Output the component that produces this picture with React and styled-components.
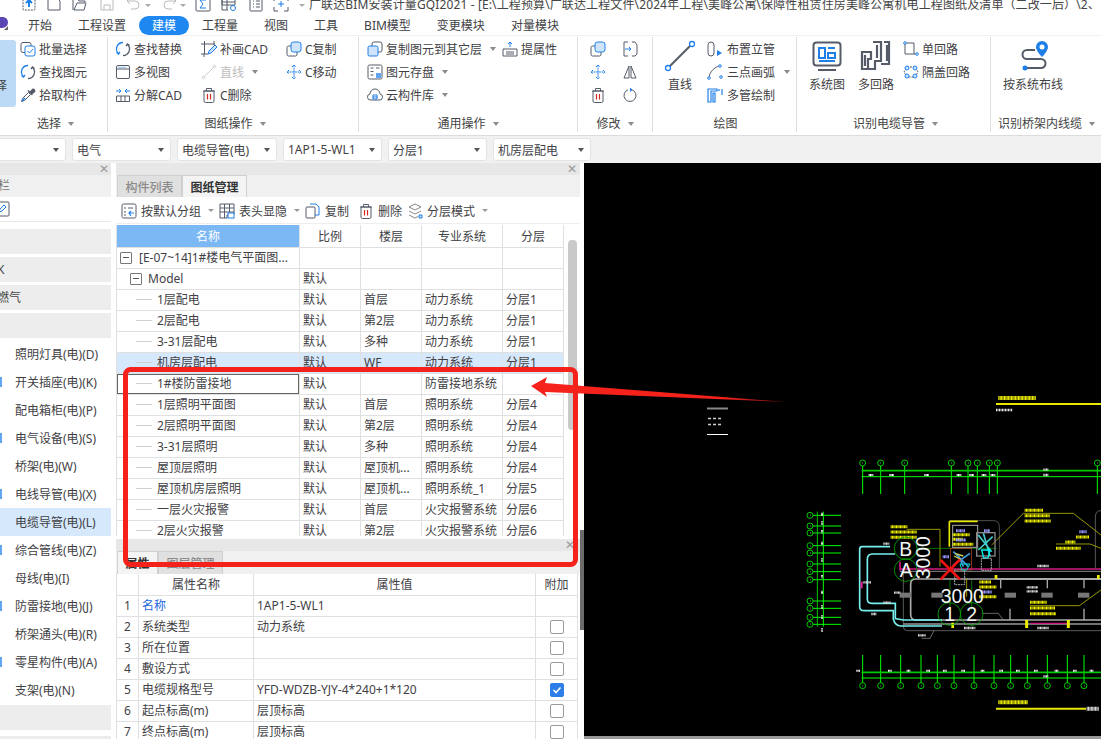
import React from 'react';
import styled, { createGlobalStyle } from 'styled-components';

const Global = createGlobalStyle`
  html, body { margin: 0; padding: 0; background: #fff; overflow: hidden; }
  * { box-sizing: border-box; }
  body { font-family: "Noto Sans", "Noto Sans CJK SC", sans-serif; font-size: 12px; color: #3f4145; }
`;

const G = '#555c68';
const B = '#1f7fe8';
const L = '#cfe3fb';
const R = '#d8281f';

const shapes = {
  upload: <><rect x="2" y="2" width="12" height="12" rx="1" fill="none" stroke={G} strokeDasharray="2 1" /><path d="M8 11V5M5 7l3-3 3 3" fill="none" stroke={B} strokeWidth="2" /></>,
  newfile: <path d="M2 2h9l3 3v9H2z" fill="none" stroke={G} />,
  open: <path d="M1 14V3h5l1 2h6v2H5L2 14h10l2-7" fill="none" stroke={G} />,
  disk: <path d="M2 2h10l2 2v10H2zM5 14V9h6v5" fill="none" stroke="#bbb" />,
  undo: <path d="M4 2L1 5l3 3M1 5h8a4 4 0 0 1 0 8H5" fill="none" stroke="#bbb" />,
  redo: <path d="M12 2l3 3-3 3M15 5H7a4 4 0 0 0 0 8h4" fill="none" stroke="#bbb" />,
  sum: <><rect x="1" y="1" width="14" height="14" rx="1" fill="none" stroke={G} /><path d="M11 4H5l3 4-3 4h6" fill="none" stroke={B} /></>,
  table: <><path d="M1 2h13v7H1zM1 6h13M6 2v12M1 2v12h6" fill="none" stroke={G} /><circle cx="12" cy="12" r="2.5" fill="none" stroke={B} /></>,
  list: <><rect x="2" y="1" width="12" height="14" rx="1" fill="none" stroke={G} /><path d="M5 5h1M8 5h4M5 8h1M8 8h4M5 11h1M8 11h4" stroke={G} /></>,
  crop: <><path d="M1 5V1h4M11 1h4v4M1 11v4h4M15 11v4h-4" fill="none" stroke={G} /><path d="M8 5v6M5 8h6" stroke={B} /></>,
  batch: <><rect x="1" y="1.5" width="10" height="10" rx="2" fill="none" stroke={G} /><rect x="5" y="5" width="10" height="10" rx="2" fill="#fff" stroke={B} /><path d="M7.5 10l2 2 3.5-4" fill="none" stroke={B} /></>,
  find: <><path d="M8 1.5A6.5 6.5 0 0 0 3.5 12.7M1.5 11.5l2 1.5 1.5-2" fill="none" stroke={B} strokeWidth="1.3" /><path d="M8 14.5a6.5 6.5 0 0 0 4.5-11.2M14.5 4.5l-2-1.5-1.5 2" fill="none" stroke={G} strokeWidth="1.3" /></>,
  pick: <><path d="M1.5 14.5l1-3 6-6 2 2-6 6z" fill="#fff" stroke={G} /><path d="M8 3.5l4.5 4.5M10 5.5l2.5-3a1.5 1.5 0 0 1 2 2l-3 2.5" fill={G} stroke={G} strokeWidth="1.5" /><path d="M2 14l3-3" stroke={B} strokeWidth="1.5" /></>,
  view: <><rect x="1.5" y="1.5" width="13" height="13" rx="1.5" fill="none" stroke={G} /><path d="M1.5 5h13" stroke={G} /><path d="M3.5 3.3h7" stroke={B} strokeDasharray="1 1" /></>,
  explode: <><path d="M1.5 9h13v5.5h-13zM6 9v5.5M10 9v5.5" fill="none" stroke={G} /><path d="M1 4h5M4 2l2 2-2 2M15 4h-5M12 2l-2 2 2 2" fill="none" stroke={B} /></>,
  patch: <><path d="M3.5 0v13M0 3h14M13 0v4M0 13h7M3 16v-3" fill="none" stroke={G} /><path d="M7 13l1-3 6-6 2 2-6 6z" fill={L} stroke={B} /></>,
  lineOff: <><path d="M3 13L13 3" stroke="#ccc" /><circle cx="2.5" cy="13.5" r="1.2" fill="none" stroke="#ccc" /><circle cx="13.5" cy="2.5" r="1.2" fill="none" stroke="#ccc" /></>,
  trash: <><path d="M3 4h10v10a1.5 1.5 0 0 1-1.5 1.5h-7A1.5 1.5 0 0 1 3 14zM2 4h12M5.500 4V1.500h5V4" fill="none" stroke={G} /><path d="M6.500 7v5.500M9.500 7v5.500" stroke={R} strokeWidth="1.2" /></>,
  ccopy: <><rect x="1" y="5" width="10" height="10" rx="1.5" fill="none" stroke={G} /><rect x="5" y="1" width="10" height="10" rx="2.500" fill={L} stroke={B} /></>,
  cmove: <path d="M8 1v14M1 8h14M6 3l2-2 2 2M6 13l2 2 2-2M3 6L1 8l2 2M13 6l2 2-2 2" fill="none" stroke={B} strokeDasharray="2 .6" />,
  layerCopy: <><rect x="5" y="1" width="10" height="10" rx="2" fill="#fff" stroke={G} /><rect x="1" y="5" width="10" height="10" rx="1.500" fill={L} stroke={B} /></>,
  attr: <><path d="M1 8h14v7H1zM4 11h8M4 13h8" fill="none" stroke={G} /><path d="M8 6V1M6 3l2-2 2 2" fill="none" stroke={B} /></>,
  saveIcon: <><rect x="1" y="1" width="14" height="14" rx="1.500" fill="none" stroke={G} /><path d="M3.500 4h3M9 4h3.500M3.500 7.500h3M3.500 11h3" stroke={G} /><rect x="9" y="9" width="5" height="5" fill={B} opacity=".7" /></>,
  cloud: <><path d="M4 13a3 3 0 0 1-1-6 5 5 0 0 1 10 0 3 3 0 0 1-1 6z" fill="none" stroke={G} /><path d="M5.500 10h5M6 8h4v4H6z" fill="none" stroke={B} /></>,
  share: <><rect x="1" y="4" width="9" height="11" rx="1" fill="none" stroke={G} /><path d="M5 1h6l3 3v8h-4" fill="none" stroke={B} /></>,
  mirror: <path d="M7 2v12H2zM9 2v12h5z" fill="none" stroke={G} />,
  rotate: <><path d="M10 2.800A6 6 0 1 1 6 2.800" fill="none" stroke={G} /><path d="M8 1l2 1.800L8 4.500" fill={B} stroke={B} /></>,
  flipDoc: <><path d="M6 1H2v14h4M10 1h3l2 3v9l-2 2h-3" fill="none" stroke={G} /><path d="M3 8h6M7 6l2 2-2 2" fill="none" stroke={B} /></>,
  riser: <><rect x="1" y="1" width="6" height="14" rx="3" fill="none" stroke={G} /><path d="M10 9v6l5-3z" fill={B} /></>,
  arc: <><path d="M2 14C2.500 8 7 3 13 2" fill="none" stroke={G} /><circle cx="2" cy="14" r="1.300" fill="#fff" stroke={B} /><circle cx="13" cy="2" r="1.300" fill="#fff" stroke={B} /><circle cx="14" cy="13" r="1.300" fill="#fff" stroke={B} /></>,
  multi: <path d="M1 2h9v2H4v11H1zM6 6h2v9H6zM12 2v2M15 2v6" fill="none" stroke={B} strokeWidth="1.200" />,
  single: <><path d="M2 2v11h12M2 2h9v11" fill="none" stroke={G} /><circle cx="2" cy="2" r="1.300" fill="#fff" stroke={B} /><circle cx="14" cy="13" r="1.300" fill="#fff" stroke={B} /></>,
  loop: <><path d="M4 3h8l3 5-3 5H4L1 8z" fill="none" stroke={G} strokeDasharray="2 1" /><circle cx="4" cy="4" r="2" fill={L} stroke={B} /><circle cx="4" cy="12" r="2" fill={L} stroke={B} /><circle cx="12" cy="4" r="2" fill={L} stroke={B} /><circle cx="12" cy="12" r="2" fill={L} stroke={B} /></>,
  group: <><rect x="1" y="1" width="14" height="14" rx="1.500" fill="none" stroke={G} /><path d="M3 5h2M7 5h5M3 9h2M3 12h2" stroke={G} /><path d="M8 10h5M10 8l-2 2 2 3" fill="none" stroke={B} strokeWidth="1.200" /></>,
  columns: <><path d="M1 1h14v11H8v3H1zM1 5h14M1 9h14M5.500 1v14M10.500 1v8" fill="none" stroke={G} /><rect x="9" y="10" width="6" height="5" fill="#fff" stroke={B} /></>,
  layers: <><path d="M2 4l6-3 6 3-6 3zM2 8l6 3 6-3M2 12l6 3 3-1.500" fill="none" stroke="#888" /><path d="M12 12h3v3h-3z" fill={L} stroke={B} /></>,
  edit: <><rect x="1" y="1" width="14" height="14" rx="1" fill="none" stroke={G} /><path d="M5 11l1-3 4-4 2 2-4 4z" fill="none" stroke={B} /></>,
  bigLine: <><path d="M3 27L27 3" stroke={G} strokeWidth="2" /><circle cx="3" cy="27" r="2.500" fill="#fff" stroke={B} strokeWidth="1.300" /><circle cx="27" cy="3" r="2.500" fill="#fff" stroke={B} strokeWidth="1.300" /></>,
  bigSys: <><rect x="1.500" y="1.500" width="27" height="23" rx="3" fill="none" stroke={G} strokeWidth="2" /><path d="M6 29h18" stroke={G} strokeWidth="2" /><path d="M7 7h6v10H7z" fill="none" stroke={B} strokeWidth="2" /><path d="M16 7h7M16 12h7v5h-7z" fill="none" stroke={B} strokeWidth="2" /><path d="M7 20h16" stroke={B} strokeWidth="2" /></>,
  bigMulti: <path d="M1 11h9v7H7v10H1zM4 14v11M12 1h8v19h-6v8H8M16 4v13M23 1h5v22H20M26 4v16" fill="none" stroke={G} strokeWidth="2.200" />,
  bigRoute: <><path d="M7 25h14a4.500 4.500 0 0 0 0-9H7a4.500 4.500 0 0 1 0-9h8" transform="translate(2 2)" fill="none" stroke={G} strokeWidth="2" /><circle cx="7" cy="27" r="2.500" fill={B} /><path d="M24 0a6 6 0 0 1 6 6c0 4-6 10-6 10s-6-6-6-10a6 6 0 0 1 6-6z" fill={B} /><circle cx="24" cy="6" r="2.500" fill="#fff" /></>,
};

const IconSvg = styled.svg`
  flex: none;
  display: block;
  overflow: visible;
`;
const Icon = ({ name, size = 16, vb = 16 }) => (
  <IconSvg width={size} height={size} viewBox={`0 0 ${vb} ${vb}`}>{shapes[name]}</IconSvg>
);

const Page = styled.div`
  position: relative;
  width: 1101px;
  height: 739px;
  overflow: hidden;
`;

/* title bar */
const TitleBar = styled.div`
  height: 16px;
  display: flex;
  align-items: flex-start;
  overflow: hidden;
  white-space: nowrap;
  padding-left: 21px;
`;
const TitleIcon = styled.span`
  margin-top: -4px;
  margin-left: ${p => p.$ml || 0}px;
  flex: none;
`;
const TitleCaret = styled.span`
  margin: 4px 0 0 ${p => p.$ml || 3}px;
  width: 0;
  height: 0;
  border: 3px solid transparent;
  border-top: 3px solid #aaa;
  border-bottom: 0;
  flex: none;
`;
const TitleText = styled.span`
  font-size: 12px;
  line-height: 16px;
  margin-top: -3px;
  margin-left: 4px;
  letter-spacing: 0.12px;
  color: #444;
`;

/* tabs */
const TabBar = styled.div`
  position: relative;
  height: 20px;
  display: flex;
  align-items: flex-start;
  padding-left: 15px;
  border-bottom: 1px solid #f0f0f0;
`;
const Logo = styled.span`
  position: absolute;
  left: -6px;
  top: 1px;
  width: 14px;
  height: 11px;
  border-radius: 7px 7px 8px 2px;
  background: #5b45b5;
`;
const LogoCorner = styled.span`
  position: absolute;
  left: 4px;
  top: 10px;
  width: 0;
  height: 0;
  border-left: 4px solid transparent;
  border-bottom: 4px solid #666;
`;
const Tab = styled.span`
  height: 19px;
  line-height: 20px;
  padding: 0 13px;
  border-radius: 10px;
  font-size: 12px;
  color: ${p => (p.$active ? '#fff' : '#3f4145')};
  background: ${p => (p.$active ? '#1e88f0' : 'transparent')};
`;

/* ribbon */
const Ribbon = styled.div`
  height: 100px;
  padding-top: 1px;
  display: flex;
  align-items: flex-start;
  background: #fff;
  border-bottom: 1px solid #dcdcdc;
`;
const Group = styled.div`
  width: ${p => p.$w}px;
  height: 95px;
  flex: none;
  display: flex;
  flex-direction: column;
  border-right: ${p => (p.$last ? 'none' : '1px solid #dedede')};
`;
const GroupBody = styled.div`
  flex: 1;
  display: flex;
  align-items: flex-start;
  padding-left: ${p => p.$pl || 0}px;
`;
const GroupLabel = styled.div`
  height: 16px;
  display: flex;
  align-items: center;
  justify-content: center;
  line-height: 16px;
  gap: 7px;
  padding-left: ${p => p.$pl || 0}px;
  color: #444;
`;
const Caret = styled.span`
  width: 0;
  height: 0;
  border: 3.5px solid transparent;
  border-top: 4px solid #8a8a8a;
  border-bottom: 0;
  flex: none;
  margin-left: ${p => p.$ml || 0}px;
`;
const SelectedTool = styled.div`
  width: 16px;
  height: 67px;
  margin-top: 3px;
  border-radius: 0 3px 3px 0;
  background: #bcd9f5;
  display: flex;
  align-items: center;
  padding-top: 22px;
  overflow: hidden;
  flex: none;
`;
const SelectedText = styled.span`
  margin-left: -5px;
`;
const Column = styled.div`
  display: flex;
  flex-direction: column;
  width: ${p => (p.$w ? `${p.$w}px` : 'auto')};
  margin-left: ${p => p.$ml || 0}px;
  flex: none;
`;
const Item = styled.div`
  height: 23px;
  display: flex;
  align-items: center;
  gap: ${p => p.$gap ?? 3}px;
  white-space: nowrap;
  color: ${p => (p.$off ? '#bdbdbd' : '#3f4145')};
`;
const IconGrid = styled.div`
  display: grid;
  grid-template-columns: 16px 16px;
  grid-auto-rows: 23px;
  column-gap: 16px;
  align-items: center;
`;
const BigTool = styled.div`
  width: ${p => p.$w}px;
  margin-left: ${p => p.$ml || 0}px;
  flex: none;
  display: flex;
  flex-direction: column;
  align-items: center;
  padding-top: 4px;
  gap: 6px;
  white-space: nowrap;
`;
const BigText = styled.span`
  line-height: 16px;
`;

/* selector row */
const SelectorBar = styled.div`
  height: 27px;
  background: #f1f1f1;
  display: flex;
  gap: 6px;
  padding: 2px 0 0 0;
`;
const Combo = styled.div`
  width: ${p => p.$w}px;
  margin-left: ${p => p.$ml || 0}px;
  flex: none;
  height: 23px;
  background: #fff;
  border: 1px solid #e4e4e4;
  border-radius: 3px;
  padding: 0 6px 0 4px;
  display: flex;
  align-items: center;
  justify-content: space-between;
  white-space: nowrap;
`;
const ComboCaret = styled.span`
  width: 0;
  height: 0;
  border: 3px solid transparent;
  border-top: 4px solid #555;
  border-bottom: 0;
`;

/* body */
const Body = styled.div`
  height: 576px;
  display: flex;
  align-items: stretch;
`;
const LeftPanel = styled.aside`
  width: 111px;
  flex: none;
  background: #fff;
  display: flex;
  flex-direction: column;
`;
const PanelHead = styled.div`
  height: 12px;
  flex: none;
  background: #e7e7e7;
  display: flex;
  justify-content: flex-end;
  align-items: center;
  padding-right: ${p => p.$pr ?? 2}px;
  font-size: 12px;
  line-height: 12px;
  color: #999;
`;
const LeftTitle = styled.div`
  height: 22px;
  background: #f0f0f0;
  line-height: 22px;
  color: #777;
  margin-left: -2px;
`;
const SearchBox = styled.div`
  height: 25px;
  padding-left: 0;
  display: flex;
  align-items: center;
  border-bottom: 1px solid #e8e8e8;
`;
const EditWrap = styled.span`
  margin-left: -6px;
`;
const NavList = styled.div`
  flex: 1;
  display: flex;
  flex-direction: column;
  padding-top: 7px;
  overflow: hidden;
`;
const Category = styled.div`
  height: 25px;
  flex: none;
  margin-bottom: ${p => p.$mb ?? 3}px;
  background: #ededed;
  line-height: 25px;
  color: #444;
  margin-top: ${p => p.$mt || 0}px;
  overflow: hidden;
`;
const CategoryText = styled.span`
  margin-left: -3px;
`;
const NavItem = styled.div`
  height: 28px;
  flex: none;
  display: flex;
  align-items: center;
  padding-left: 15px;
  position: relative;
  white-space: nowrap;
  background: ${p => (p.$active ? '#d6e8fb' : 'transparent')};
`;
const NavMark = styled.span`
  position: absolute;
  left: 0;
  width: 2px;
  height: 10px;
  background: ${B};
  opacity: .7;
`;
const Fill = styled.div`
  flex: 1;
  background: #ececec;
  margin-top: 3px;
`;

const Middle = styled.section`
  width: 464px;
  margin-left: 5px;
  flex: none;
  display: flex;
  flex-direction: column;
  background: #fff;
`;
const TabStrip = styled.div`
  height: ${p => p.$h}px;
  flex: none;
  background: #f0f0f0;
  display: flex;
  align-items: stretch;
  padding-left: 1px;
`;
const PanelTab = styled.div`
  width: ${p => p.$w}px;
  display: flex;
  align-items: center;
  justify-content: center;
  border: 1px solid #d0d0d0;
  border-bottom: 0;
  white-space: nowrap;
  font-weight: ${p => (p.$active ? 600 : 500)};
  color: ${p => (p.$active ? '#333' : '#8c8c8c')};
  background: ${p => (p.$active ? '#f4f4f4' : '#e0e0e0')};
`;
const Toolbar = styled.div`
  height: 26px;
  margin-top: 1px;
  flex: none;
  display: flex;
  align-items: center;
  gap: 5px;
  padding-left: 5px;
  border-bottom: 1px solid #eee;
`;
const ToolButton = styled.div`
  display: flex;
  align-items: center;
  gap: 4px;
  white-space: nowrap;
  margin-right: ${p => p.$mr || 0}px;
`;
const ToolCaret = styled.span`
  width: 0;
  height: 0;
  border: 3px solid transparent;
  border-top: 3.5px solid #999;
  border-bottom: 0;
  margin-left: 3px;
`;
const TableArea = styled.div`
  height: 311px;
  flex: none;
  margin-top: 1px;
  display: flex;
  overflow: hidden;
`;
const Grid = styled.table`
  border-collapse: collapse;
  table-layout: fixed;
  width: ${p => p.$w}px;
  align-self: flex-start;
  flex: none;
`;
const Th = styled.th`
  height: ${p => p.$h || 22}px;
  padding: 0;
  font-weight: 400;
  font-size: 12px;
  text-align: center;
  border: 1px solid #e0e0e0;
  border-top: 0;
  color: ${p => (p.$blue ? '#fff' : '#3f4145')};
  background: ${p => (p.$blue ? '#7cb8f3' : '#fff')};
`;
const Td = styled.td`
  height: 21px;
  padding: 0 0 0 ${p => p.$pl ?? 3}px;
  border: 1px solid #e0e0e0;
  white-space: nowrap;
  overflow: hidden;
  font-size: 12px;
  line-height: ${p => (p.$tight ? 0 : '19px')};
  text-align: ${p => p.$align || 'left'};
  color: ${p => p.$color || '#3f4145'};
  background: ${p => (p.$sel ? '#d6e8fb' : '#fff')};
  box-shadow: ${p => (p.$focus ? 'inset 0 0 0 1px #666' : 'none')};
`;
const TreeCell = styled.div`
  display: flex;
  align-items: center;
  height: 19px;
  padding-left: ${p => p.$pl}px;
  gap: ${p => p.$gap}px;
`;
const Expander = styled.span`
  width: 12px;
  height: 12px;
  border: 1px solid #777;
  border-radius: 1px;
  display: flex;
  align-items: center;
  justify-content: center;
  flex: none;
  &::after {
    content: "";
    width: 6px;
    height: 1px;
    background: #555;
  }
`;
const TreeDash = styled.span`
  width: 16px;
  height: 1px;
  background: #d0d0d0;
  flex: none;
`;
const ScrollTrack = styled.div`
  width: 15px;
  flex: none;
  padding: 15px 2px 0 4px;
`;
const ScrollThumb = styled.div`
  height: 190px;
  border-radius: 4px;
  background: #c9c9c9;
`;
const WhiteGap = styled.div`
  height: 3px;
  flex: none;
`;
const Props = styled.div`
  flex: 1;
  overflow: hidden;
`;
const Check = styled.span`
  display: inline-flex;
  align-items: center;
  justify-content: center;
  vertical-align: middle;
  width: 14px;
  height: 14px;
  border: 1px solid ${p => (p.$on ? '#2d7ee8' : '#9a9a9a')};
  border-radius: 2px;
  background: ${p => (p.$on ? '#2d7ee8' : '#fff')};
`;

const Gutter = styled.div`
  width: 4px;
  flex: none;
  background: #fff;
`;
const Handle = styled.div`
  width: 5px;
  height: 100px;
  margin-top: 367px;
  background: #6b6b6b;
`;
const Canvas = styled.main`
  flex: 1;
  background: #000;
  overflow: hidden;
`;
const CanvasSvg = styled.svg`
  display: block;
  width: 517px;
  height: 576px;
`;
const Annotation = styled.svg`
  position: absolute;
  left: 0;
  top: 0;
  pointer-events: none;
`;

/* data */
const tabs = ['开始', '工程设置', '建模', '工程量', '视图', '工具', 'BIM模型', '变更模块', '对量模块'];
const navItems = ['照明灯具(电)(D)', '开关插座(电)(K)', '配电箱柜(电)(P)', '电气设备(电)(S)', '桥架(电)(W)', '电线导管(电)(X)', '电缆导管(电)(L)', '综合管线(电)(Z)', '母线(电)(I)', '防雷接地(电)(J)', '桥架通头(电)(R)', '零星构件(电)(A)', '支架(电)(N)'];
const rows = [
  [0, '[E-07~14]1#楼电气平面图...', '', '', '', ''],
  [1, 'Model', '默认', '', '', ''],
  [2, '1层配电', '默认', '首层', '动力系统', '分层1'],
  [2, '2层配电', '默认', '第2层', '动力系统', '分层1'],
  [2, '3-31层配电', '默认', '多种', '动力系统', '分层1'],
  [2, '机房层配电', '默认', 'WF', '动力系统', '分层1'],
  [2, '1#楼防雷接地', '默认', '', '防雷接地系统', ''],
  [2, '1层照明平面图', '默认', '首层', '照明系统', '分层4'],
  [2, '2层照明平面图', '默认', '第2层', '照明系统', '分层4'],
  [2, '3-31层照明', '默认', '多种', '照明系统', '分层4'],
  [2, '屋顶层照明', '默认', '屋顶机...', '照明系统', '分层4'],
  [2, '屋顶机房层照明', '默认', '屋顶机...', '照明系统_1', '分层5'],
  [2, '一层火灾报警', '默认', '首层', '火灾报警系统', '分层6'],
  [2, '2层火灾报警', '默认', '第2层', '火灾报警系统', '分层6'],
];
const props = [
  ['名称', '1AP1-5-WL1', null],
  ['系统类型', '动力系统', false],
  ['所在位置', '', false],
  ['敷设方式', '', false],
  ['电缆规格型号', 'YFD-WDZB-YJY-4*240+1*120', true],
  ['起点标高(m)', '层顶标高', false],
  ['终点标高(m)', '层顶标高', false],
];

const Tree = ({ level, text }) => {
  if (level === 0) return <TreeCell $pl={0} $gap={7}><Expander />{text}</TreeCell>;
  if (level === 1) return <TreeCell $pl={10} $gap={6}><Expander />{text}</TreeCell>;
  return <TreeCell $pl={16} $gap={5}><TreeDash />{text}</TreeCell>;
};

const Tool = ({ icon, text, caret, off, gap }) => (
  <Item $off={off} $gap={gap}><Icon name={icon} />{text}{caret && <Caret $ml={5} />}</Item>
);

/* CAD drawing, in coordinates of the sheet */
const topAxes = [218, 272, 344, 484, 534, 562, 598, 622, 922];
const bottomAxes = [218, 272, 332, 393, 442, 492, 552, 612, 662, 712, 772, 832, 882];
const leftAxes = [406, 438, 459, 497, 519, 552, 575, 599, 663, 685, 712, 733];
const yellowBlocks = [
  [302, 440, 50], [302, 456, 78], [302, 472, 78], [704, 391, 56], [704, 407, 76], [704, 423, 78],
  [720, 667, 50], [720, 684, 76], [720, 701, 78], [488, 464, 52], [488, 478, 30], [488, 493, 62],
  [858, 471, 40], [798, 505, 74], [826, 486, 30], [568, 606, 36], [568, 621, 52], [568, 650, 52],
];
const blueBlocks = [[868, 455, 22], [574, 636, 32], [498, 452, 28], [498, 480, 30], [458, 530, 20], [582, 452, 18]];
const whiteBlocks = [
  [280, 491, 18], [220, 607, 24], [312, 638, 20], [280, 668, 22], [244, 702, 16], [384, 766, 24],
  [522, 744, 34], [742, 558, 34], [742, 744, 34], [710, 622, 34], [710, 634, 34], [760, 269, 16],
  [760, 285, 16], [760, 889, 16],
];
const Cad = () => (
  <CanvasSvg viewBox="584 163 517 576">
    <path d="M707 408.500h21" stroke="#888" strokeWidth="2" />
    <path d="M708 418.500h14M708 424.500h14" stroke="#ccc" strokeWidth="1.500" strokeDasharray="3 2" />
    <path d="M707 434.500h21" stroke="#fff" />
    <rect x="584" y="736" width="517" height="3" fill="#999" />
    <g transform="translate(790 380) scale(.33333)" fill="none">
      <path d="M625 54h113" stroke="#ff0" strokeWidth="12" strokeDasharray="3 1.200" />
      <path d="M618 72h315" stroke="#e8e800" strokeWidth="6" />
      <path d="M618 90h50" stroke="#eee" strokeWidth="7" strokeDasharray="3 1.500" />
      {topAxes.map(x => (
        <g key={x}>
          <circle cx={x} cy="249" r="9" stroke="#0c0" strokeWidth="3" />
          <path d={`M${x} 249h1`} stroke="#6f6" strokeWidth="6" />
          <path d={`M${x} 258V342`} stroke="#0f0" strokeWidth="3" />
        </g>
      ))}
      <path d="M215 272h718" stroke="#0c0" strokeWidth="5" />
      <path d="M215 290h718" stroke="#0f0" strokeWidth="3" />
      {bottomAxes.map(x => (
        <g key={x}>
          <circle cx={x} cy="917" r="9" stroke="#0c0" strokeWidth="3" />
          <path d={`M${x} 917h1`} stroke="#6f6" strokeWidth="6" />
          <path d={`M${x} 825V908`} stroke="#0f0" strokeWidth="3" />
        </g>
      ))}
      <path d="M215 877h718" stroke="#0c0" strokeWidth="5" />
      <path d="M215 894h718" stroke="#0f0" strokeWidth="3" />
      {[243, 305, 410, 507, 545, 582, 609].map(x => <path key={x} d={`M${x - 7} 285h14`} stroke="#fff" strokeWidth="6" strokeDasharray="3 1" />)}
      {[205, 300, 356, 415, 465, 520, 578, 634, 684, 738, 800, 855, 905].map(x => <path key={x} d={`M${x - 6} 872h12`} stroke="#fff" strokeWidth="6" strokeDasharray="3 1" />)}
      {leftAxes.map(y => (
        <g key={y}>
          <circle cx="60" cy={y} r="9" stroke="#0c0" strokeWidth="3" />
          <path d={`M60 ${y}h1`} stroke="#6f6" strokeWidth="6" />
          <path d={`M69 ${y}H153`} stroke="#0f0" strokeWidth="3" />
        </g>
      ))}
      <path d="M82 395V740" stroke="#0c0" strokeWidth="3" />
      <path d="M100 395V740" stroke="#0f0" strokeWidth="3" />
      {[398, 424, 450, 485, 535, 585, 632, 676, 706, 745].map(y => <path key={y} d={`M96 ${y}v10`} stroke="#fff" strokeWidth="5" strokeDasharray="3 1" />)}

      <path d="M340 580V740Q340 752 352 752H933" stroke="#888" strokeWidth="2" />
      <path d="M640 597H378Q362 597 362 612V704Q362 720 380 720H933" stroke="#aaa" strokeWidth="5" />
      <path d="M620 597H933" stroke="#aaa" strokeWidth="6" />
      <path d="M340 732H933" stroke="#999" strokeWidth="5" />
      <path d="M330 567H933" stroke="#d01a80" strokeWidth="5" />
      <path d="M330 574H933" stroke="#888" strokeWidth="3" />
      <path d="M330 545V572" stroke="#d01a80" strokeWidth="5" />
      {[632, 772, 882].map(x => <path key={x} d={`M${x} 597v28`} stroke="#aaa" strokeWidth="4" />)}
      {[660, 882].map(x => <path key={x} d={`M${x} 686v34`} stroke="#aaa" strokeWidth="4" />)}
      {[345, 440, 660, 770, 880].map(x => <rect key={x} x={x - 16} y="638" width="34" height="15" fill="#777" />)}
      <path d="M480 422H610Q628 422 628 440V565" stroke="#777" strokeWidth="2" />
      <path d="M916 565V412Q916 392 933 392" stroke="#888" strokeWidth="2" />
      <path d="M478 424V500M478 424h85" stroke="#e6e600" strokeWidth="5" />
      <path d="M300 500H215Q209 500 209 510V680Q209 692 222 692H310V718Q316 738 332 738H456" stroke="#7ee" strokeWidth="5" />
      <path d="M315 522H247Q232 522 232 538V658Q232 670 246 670H316V716L340 720H456" stroke="#7ee" strokeWidth="5" />
      <path d="M215 605v20" stroke="#e0209a" strokeWidth="6" />
      <path d="M722 730H830" stroke="#d01a80" strokeWidth="4" />
      {[710, 835].map(x => <path key={x} d={`M${x} 720v24`} stroke="#ee0" strokeWidth="9" />)}
      <path d="M488 728v16M618 585v12M925 585v12" stroke="#ee0" strokeWidth="8" />

      <path d="M350 448H450V560M700 400L605 495M700 400H850L933 465M530 595V650M720 677H868L933 630M798 492H900L933 505" stroke="#b5b500" strokeWidth="2.500" />
      <path d="M380 505H620" stroke="#0a0" strokeWidth="2" />
      <path d="M480 600V700M545 600V690" stroke="#0a0" strokeWidth="2" />
      <path d="M575 700H625L640 720M395 775H420L432 752" stroke="#999" strokeWidth="2" />

      <rect x="488" y="436" width="75" height="66" stroke="#aaa" strokeWidth="3" />
      <rect x="560" y="458" width="55" height="70" stroke="#888" strokeWidth="4" />
      <path d="M565 465L605 515M565 510L608 470M580 460L600 528" stroke="#4cc" strokeWidth="5" />
      <path d="M575 510h25l-6 24h-13z" stroke="#0ee" strokeWidth="4" />
      <rect x="574" y="535" width="30" height="36" stroke="#aaa" strokeWidth="3" strokeDasharray="6 2" />
      <rect x="494" y="570" width="30" height="44" stroke="#aaa" strokeWidth="3" strokeDasharray="6 2" />
      <rect x="482" y="506" width="62" height="64" stroke="#c44a2a" strokeWidth="2" />
      <path d="M490 515L535 560M490 555L540 520M505 525L520 560" stroke="#49d" strokeWidth="5" />
      <path d="M495 520l25 8M492 528l20 10" stroke="#cc4" strokeWidth="4" />
      <path d="M510 552h30l-10 18h-14z" stroke="#0dd" strokeWidth="3" />

      {yellowBlocks.map(([x, y, w]) => <path key={`${x}-${y}`} d={`M${x} ${y}h${w}`} stroke="#f4f400" strokeWidth="9" strokeDasharray="3 1" />)}
      {blueBlocks.map(([x, y, w]) => <path key={`${x}-${y}`} d={`M${x} ${y}h${w}`} stroke="#99f" strokeWidth="9" strokeDasharray="3 1" />)}
      {whiteBlocks.map(([x, y, w]) => <path key={`${x}-${y}`} d={`M${x} ${y}h${w}`} stroke="#ddd" strokeWidth="7" strokeDasharray="3 1" />)}

      <circle cx="347" cy="505" r="34" stroke="#0a0" strokeWidth="2.500" />
      <circle cx="347" cy="570" r="34" stroke="#0a0" strokeWidth="2.500" />
      <circle cx="478" cy="702" r="34" stroke="#0a0" strokeWidth="2.500" />
      <circle cx="545" cy="702" r="34" stroke="#0a0" strokeWidth="2.500" />
      <g fill="#f4f4f4" fontFamily="Liberation Sans, sans-serif" fontSize="58">
        <text x="328" y="527">B</text>
        <text x="329" y="592">A</text>
        <text x="463" y="722">1</text>
        <text x="529" y="722">2</text>
        <text x="452" y="668">3000</text>
        <text transform="translate(421 598) rotate(-90)">3000</text>
      </g>
      <path d="M452 598L510 538M452 540L510 598" stroke="#f01010" strokeWidth="8" />

      <path d="M625 967h89" stroke="#ff0" strokeWidth="12" strokeDasharray="3 1.200" />
      <path d="M618 986h270" stroke="#e8e800" strokeWidth="6" />
      <path d="M890 986h36" stroke="#eee" strokeWidth="12" strokeDasharray="3 1.200" />
    </g>
  </CanvasSvg>
);

export default function App() {
  return (
    <Page>
      <Global />
      <TitleBar>
        <TitleIcon><Icon name="upload" /></TitleIcon>
        <TitleIcon $ml={9}><Icon name="newfile" /></TitleIcon>
        <TitleIcon $ml={10}><Icon name="open" /></TitleIcon>
        <TitleIcon $ml={11}><Icon name="disk" /></TitleIcon>
        <TitleIcon $ml={11}><Icon name="undo" /></TitleIcon>
        <TitleCaret />
        <TitleIcon $ml={10}><Icon name="redo" /></TitleIcon>
        <TitleCaret />
        <TitleIcon $ml={9}><Icon name="sum" /></TitleIcon>
        <TitleIcon $ml={10}><Icon name="table" /></TitleIcon>
        <TitleIcon $ml={11}><Icon name="list" /></TitleIcon>
        <TitleIcon $ml={9}><Icon name="crop" /></TitleIcon>
        <TitleCaret $ml={10} />
        <TitleText>广联达BIM安装计量GQI2021 - [E:\工程预算\广联达工程文件\2024年工程\美峰公寓\保障性租赁住房美峰公寓机电工程图纸及清单（二改一后）\2、</TitleText>
      </TitleBar>

      <TabBar>
        <Logo />
        <LogoCorner />
        {tabs.map(t => <Tab key={t} $active={t === '建模'}>{t}</Tab>)}
      </TabBar>

      <Ribbon>
        <Group $w={108}>
          <GroupBody>
            <SelectedTool><SelectedText>择</SelectedText></SelectedTool>
            <Column $ml={4}>
              <Tool icon="batch" text="批量选择" />
              <Tool icon="find" text="查找图元" />
              <Tool icon="pick" text="拾取构件" />
            </Column>
          </GroupBody>
          <GroupLabel $pl={4}>选择<Caret /></GroupLabel>
        </Group>
        <Group $w={251}>
          <GroupBody $pl={7}>
            <Column $w={86}>
              <Tool icon="find" text="查找替换" />
              <Tool icon="view" text="多视图" />
              <Tool icon="explode" text="分解CAD" />
            </Column>
            <Column $w={85}>
              <Tool icon="patch" text="补画CAD" />
              <Tool icon="lineOff" text="直线" caret off />
              <Tool icon="trash" text="C删除" />
            </Column>
            <Column>
              <Tool icon="ccopy" text="C复制" />
              <Tool icon="cmove" text="C移动" />
            </Column>
          </GroupBody>
          <GroupLabel $pl={4}>图纸操作<Caret /></GroupLabel>
        </Group>
        <Group $w={219}>
          <GroupBody $pl={8}>
            <Column $w={135}>
              <Tool icon="layerCopy" text="复制图元到其它层" caret />
              <Tool icon="saveIcon" text="图元存盘" caret />
              <Tool icon="cloud" text="云构件库" caret />
            </Column>
            <Column>
              <Tool icon="attr" text="提属性" />
            </Column>
          </GroupBody>
          <GroupLabel>通用操作<Caret /></GroupLabel>
        </Group>
        <Group $w={75}>
          <GroupBody $pl={12}>
            <IconGrid>
              <Icon name="ccopy" />
              <Icon name="flipDoc" />
              <Icon name="cmove" />
              <Icon name="mirror" />
              <Icon name="trash" />
              <Icon name="rotate" />
            </IconGrid>
          </GroupBody>
          <GroupLabel>修改<Caret /></GroupLabel>
        </Group>
        <Group $w={144}>
          <GroupBody $pl={13}>
            <BigTool $w={28}>
              <Icon name="bigLine" size={30} vb={30} />
              <BigText>直线</BigText>
            </BigTool>
            <Column $ml={13}>
              <Tool icon="riser" text="布置立管" gap={4} />
              <Tool icon="arc" text="三点画弧" gap={4} caret />
              <Tool icon="multi" text="多管绘制" gap={4} />
            </Column>
          </GroupBody>
          <GroupLabel $pl={2}>绘图</GroupLabel>
        </Group>
        <Group $w={194}>
          <GroupBody $pl={12}>
            <BigTool $w={36}><Icon name="bigSys" size={30} vb={30} /><BigText>系统图</BigText></BigTool>
            <BigTool $w={36} $ml={13}><Icon name="bigMulti" size={30} vb={30} /><BigText>多回路</BigText></BigTool>
            <Column $ml={9}>
              <Tool icon="single" text="单回路" />
              <Tool icon="loop" text="隔盖回路" />
            </Column>
          </GroupBody>
          <GroupLabel $pl={4}>识别电缆导管<Caret /></GroupLabel>
        </Group>
        <Group $w={111} $last>
          <GroupBody $pl={12}>
            <BigTool $w={60}><Icon name="bigRoute" size={30} vb={30} /><BigText>按系统布线</BigText></BigTool>
          </GroupBody>
          <GroupLabel>识别桥架内线缆<Caret /></GroupLabel>
        </Group>
      </Ribbon>

      <SelectorBar>
        <Combo $w={76} $ml={-10}><span /><ComboCaret /></Combo>
        <Combo $w={99}>电气<ComboCaret /></Combo>
        <Combo $w={100}>电缆导管(电)<ComboCaret /></Combo>
        <Combo $w={99}>1AP1-5-WL1<ComboCaret /></Combo>
        <Combo $w={99}>分层1<ComboCaret /></Combo>
        <Combo $w={98}>机房层配电<ComboCaret /></Combo>
      </SelectorBar>

      <Body>
        <LeftPanel>
          <PanelHead>✕</PanelHead>
          <LeftTitle>栏</LeftTitle>
          <SearchBox><EditWrap><Icon name="edit" /></EditWrap></SearchBox>
          <NavList>
            <Category />
            <Category><CategoryText>K</CategoryText></Category>
            <Category><CategoryText>燃气</CategoryText></Category>
            <Category $mb={2} />
            {navItems.map((n, i) => (
              <NavItem key={n} $active={i === 6}>
                {i % 2 === 1 && <NavMark />}
                {n}
              </NavItem>
            ))}
            <Category $mt={1} />
            <Fill />
          </NavList>
        </LeftPanel>

        <Middle>
          <PanelHead $pr={3}>✕</PanelHead>
          <TabStrip $h={22}>
            <PanelTab $w={65}>构件列表</PanelTab>
            <PanelTab $w={65} $active>图纸管理</PanelTab>
          </TabStrip>
          <Toolbar>
            <ToolButton><Icon name="group" />按默认分组<ToolCaret /></ToolButton>
            <ToolButton><Icon name="columns" />表头显隐<ToolCaret /></ToolButton>
            <ToolButton $mr={4}><Icon name="share" />复制</ToolButton>
            <ToolButton><Icon name="trash" />删除</ToolButton>
            <ToolButton><Icon name="layers" />分层模式<ToolCaret /></ToolButton>
          </Toolbar>
          <TableArea>
            <Grid $w={447}>
              <colgroup>
                <col width="183" /><col width="61" /><col width="61" /><col width="81" /><col width="61" />
              </colgroup>
              <thead>
                <tr>
                  <Th $blue>名称</Th><Th>比例</Th><Th>楼层</Th><Th>专业系统</Th><Th>分层</Th>
                </tr>
              </thead>
              <tbody>
                {rows.map(([level, name, a, b, c, d], i) => (
                  <tr key={name}>
                    <Td $pl={3} $sel={i === 5} $focus={i === 6}><Tree level={level} text={name} /></Td>
                    <Td $sel={i === 5}>{a}</Td>
                    <Td $sel={i === 5}>{b}</Td>
                    <Td $sel={i === 5}>{c}</Td>
                    <Td $sel={i === 5}>{d}</Td>
                  </tr>
                ))}
              </tbody>
            </Grid>
            <ScrollTrack><ScrollThumb /></ScrollTrack>
          </TableArea>
          <WhiteGap />
          <PanelHead $pr={5}>✕</PanelHead>
          <TabStrip $h={23}>
            <PanelTab $w={41} $active>属性</PanelTab>
            <PanelTab $w={65}>图层管理</PanelTab>
          </TabStrip>
          <Props>
            <Grid $w={461}>
              <colgroup>
                <col width="22" /><col width="115" /><col width="282" /><col width="42" />
              </colgroup>
              <thead>
                <tr>
                  <Th $h={21} /><Th $h={21}>属性名称</Th><Th $h={21}>属性值</Th><Th $h={21}>附加</Th>
                </tr>
              </thead>
              <tbody>
                {props.map(([name, value, checked], i) => (
                  <tr key={name}>
                    <Td $pl={0} $align="center">{i + 1}</Td>
                    <Td $color={i === 0 ? '#2468e0' : undefined}>{name}</Td>
                    <Td>{value}</Td>
                    <Td $pl={0} $align="center" $tight>
                      {checked !== null && (
                        <Check $on={checked}>
                          {checked && (
                            <svg width="10" height="10" viewBox="0 0 10 10"><path d="M1.500 5l2.500 2.500L8.500 2.500" fill="none" stroke="#fff" strokeWidth="1.600" /></svg>
                          )}
                        </Check>
                      )}
                    </Td>
                  </tr>
                ))}
              </tbody>
            </Grid>
          </Props>
        </Middle>

        <Gutter><Handle /></Gutter>
        <Canvas><Cad /></Canvas>
      </Body>

      <Annotation width="1101" height="739" viewBox="0 0 1101 739">
        <defs>
          <linearGradient id="arrowFade" x1="531" y1="0" x2="787" y2="0" gradientUnits="userSpaceOnUse">
            <stop offset="0" stopColor="#f5221b" />
            <stop offset=".75" stopColor="#f5221b" />
            <stop offset="1" stopColor="#701010" />
          </linearGradient>
        </defs>
        <rect x="125.500" y="369.500" width="450" height="195" rx="5" fill="none" stroke="#f5221b" strokeWidth="5" />
        <polygon points="531,386 547,377 545,383 787,402 545,392 547,397" fill="url(#arrowFade)" />
      </Annotation>
    </Page>
  );
}
